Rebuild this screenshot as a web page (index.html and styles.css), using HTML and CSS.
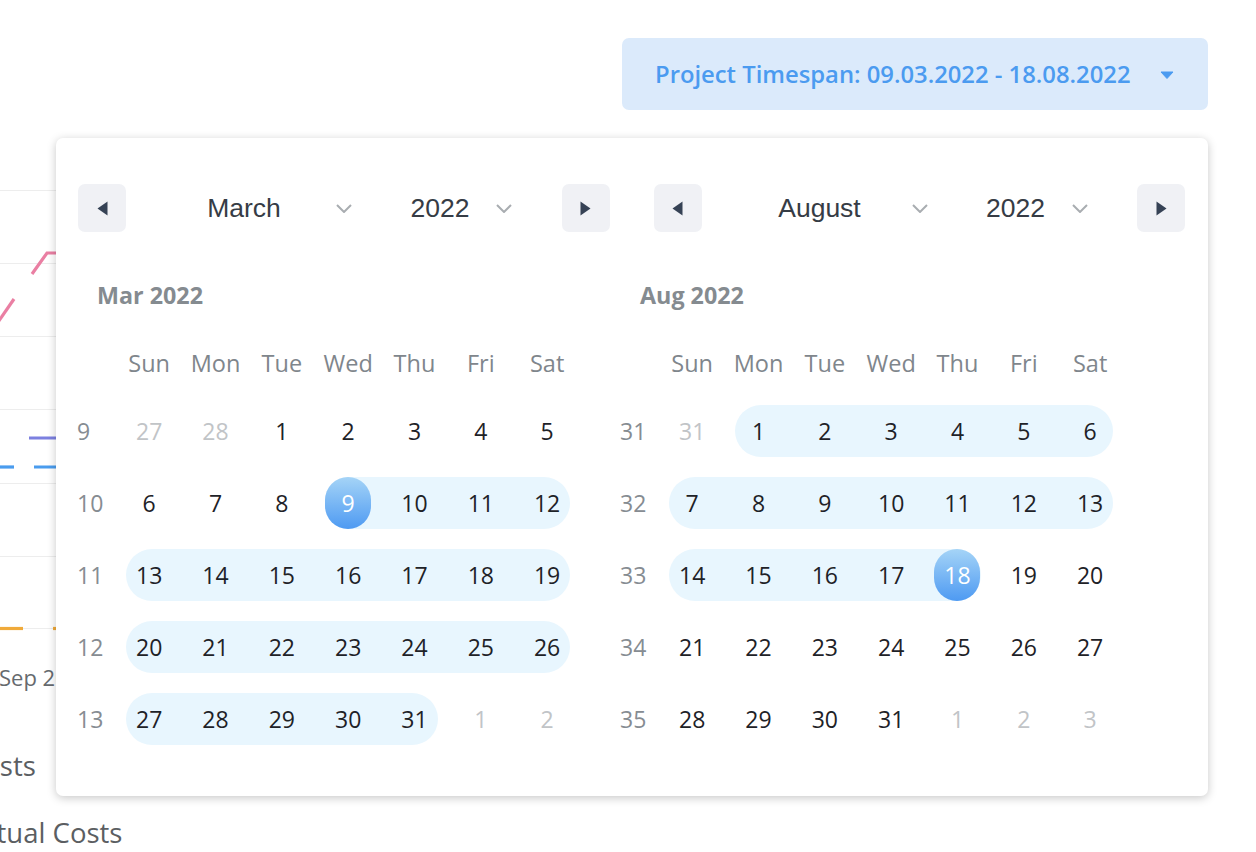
FILE: index.html
```html
<!DOCTYPE html>
<html>
<head>
<meta charset="utf-8">
<link rel="stylesheet" href="styles.css">
</head>
<body>
<div class="page">
  <div class="backdrop">
    <svg class="chart" width="200" height="700" viewBox="0 0 200 700">
      <g stroke="#ededed" stroke-width="1">
        <line x1="0" y1="190.5" x2="200" y2="190.5"/>
        <line x1="0" y1="263.5" x2="200" y2="263.5"/>
        <line x1="0" y1="336.5" x2="200" y2="336.5"/>
        <line x1="0" y1="409.5" x2="200" y2="409.5"/>
        <line x1="0" y1="483.5" x2="200" y2="483.5"/>
        <line x1="0" y1="556.5" x2="200" y2="556.5"/>
        <line x1="0" y1="628.5" x2="200" y2="628.5"/>
      </g>
      <g fill="none" stroke-width="3.2">
        <polyline stroke="#ea7fa3" points="-4,325 14,299"/>
        <polyline stroke="#ea7fa3" points="32,274 47,253 60,253"/>
        <line stroke="#7c80e0" x1="29" y1="438" x2="70" y2="438"/>
        <line stroke="#4a9cee" x1="-2" y1="467" x2="14" y2="467"/>
        <line stroke="#4a9cee" x1="34" y1="467" x2="70" y2="467"/>
        <line stroke="#f0aa3a" x1="-2" y1="628.5" x2="23" y2="628.5"/>
        <line stroke="#f0aa3a" x1="53" y1="628.5" x2="70" y2="628.5"/>
      </g>
      <text class="axis" x="-1" y="686">Sep 2022</text>
    </svg>
    <div class="legend">
      <div class="legend-item planned">Costs</div>
      <div class="legend-item actual">Actual Costs</div>
    </div>
  </div>

  <div class="picker">
    <button class="trigger">
      <span class="trigger-label">Project Timespan: 09.03.2022 - 18.08.2022</span>
      <svg class="caret" width="14" height="8" viewBox="0 0 14 8"><path d="M1 1h12l-6 6.5z" fill="#4b9bf0" stroke="#4b9bf0" stroke-width="1" stroke-linejoin="round"/></svg>
    </button>

    <div class="popup">
      <div class="navs">
        <div class="nav">
          <div class="nav-btn"><svg width="11" height="15" viewBox="0 0 11 15"><path d="M10.5 0.5v14L0.5 7.5z" fill="#364255"/></svg></div>
          <div class="sel month-sel"><span class="sel-text">March</span><svg class="chev" width="16" height="9" viewBox="0 0 16 9"><polyline points="1,1 8,8 15,1" fill="none" stroke="#a9adb1" stroke-width="2"/></svg></div>
          <div class="sel year-sel"><span class="sel-text">2022</span><svg class="chev" width="16" height="9" viewBox="0 0 16 9"><polyline points="1,1 8,8 15,1" fill="none" stroke="#a9adb1" stroke-width="2"/></svg></div>
          <div class="nav-btn right"><svg width="11" height="15" viewBox="0 0 11 15"><path d="M0.5 0.5v14L10.5 7.5z" fill="#364255"/></svg></div>
        </div>
        <div class="nav">
          <div class="nav-btn"><svg width="11" height="15" viewBox="0 0 11 15"><path d="M10.5 0.5v14L0.5 7.5z" fill="#364255"/></svg></div>
          <div class="sel month-sel"><span class="sel-text">August</span><svg class="chev" width="16" height="9" viewBox="0 0 16 9"><polyline points="1,1 8,8 15,1" fill="none" stroke="#a9adb1" stroke-width="2"/></svg></div>
          <div class="sel year-sel"><span class="sel-text">2022</span><svg class="chev" width="16" height="9" viewBox="0 0 16 9"><polyline points="1,1 8,8 15,1" fill="none" stroke="#a9adb1" stroke-width="2"/></svg></div>
          <div class="nav-btn right"><svg width="11" height="15" viewBox="0 0 11 15"><path d="M0.5 0.5v14L10.5 7.5z" fill="#364255"/></svg></div>
        </div>
      </div>

      <div class="months">
        <div class="month">
          <div class="month-title">Mar 2022</div>
          <div class="week head"><span></span><span>Sun</span><span>Mon</span><span>Tue</span><span>Wed</span><span>Thu</span><span>Fri</span><span>Sat</span></div>
          <div class="week">
            <span class="wk">9</span>
            <span class="day out"><b>27</b></span><span class="day out"><b>28</b></span><span class="day"><b>1</b></span><span class="day"><b>2</b></span><span class="day"><b>3</b></span><span class="day"><b>4</b></span><span class="day"><b>5</b></span>
          </div>
          <div class="week">
            <span class="wk">10</span>
            <span class="day"><b>6</b></span><span class="day"><b>7</b></span><span class="day"><b>8</b></span><span class="day in first"><b class="sel-day">9</b></span><span class="day in"><b>10</b></span><span class="day in"><b>11</b></span><span class="day in last"><b>12</b></span>
          </div>
          <div class="week">
            <span class="wk">11</span>
            <span class="day in first"><b>13</b></span><span class="day in"><b>14</b></span><span class="day in"><b>15</b></span><span class="day in"><b>16</b></span><span class="day in"><b>17</b></span><span class="day in"><b>18</b></span><span class="day in last"><b>19</b></span>
          </div>
          <div class="week">
            <span class="wk">12</span>
            <span class="day in first"><b>20</b></span><span class="day in"><b>21</b></span><span class="day in"><b>22</b></span><span class="day in"><b>23</b></span><span class="day in"><b>24</b></span><span class="day in"><b>25</b></span><span class="day in last"><b>26</b></span>
          </div>
          <div class="week">
            <span class="wk">13</span>
            <span class="day in first"><b>27</b></span><span class="day in"><b>28</b></span><span class="day in"><b>29</b></span><span class="day in"><b>30</b></span><span class="day in last"><b>31</b></span><span class="day out"><b>1</b></span><span class="day out"><b>2</b></span>
          </div>
        </div>

        <div class="month">
          <div class="month-title">Aug 2022</div>
          <div class="week head"><span></span><span>Sun</span><span>Mon</span><span>Tue</span><span>Wed</span><span>Thu</span><span>Fri</span><span>Sat</span></div>
          <div class="week">
            <span class="wk">31</span>
            <span class="day out"><b>31</b></span><span class="day in first"><b>1</b></span><span class="day in"><b>2</b></span><span class="day in"><b>3</b></span><span class="day in"><b>4</b></span><span class="day in"><b>5</b></span><span class="day in last"><b>6</b></span>
          </div>
          <div class="week">
            <span class="wk">32</span>
            <span class="day in first"><b>7</b></span><span class="day in"><b>8</b></span><span class="day in"><b>9</b></span><span class="day in"><b>10</b></span><span class="day in"><b>11</b></span><span class="day in"><b>12</b></span><span class="day in last"><b>13</b></span>
          </div>
          <div class="week">
            <span class="wk">33</span>
            <span class="day in first"><b>14</b></span><span class="day in"><b>15</b></span><span class="day in"><b>16</b></span><span class="day in"><b>17</b></span><span class="day in last"><b class="sel-day">18</b></span><span class="day"><b>19</b></span><span class="day"><b>20</b></span>
          </div>
          <div class="week">
            <span class="wk">34</span>
            <span class="day"><b>21</b></span><span class="day"><b>22</b></span><span class="day"><b>23</b></span><span class="day"><b>24</b></span><span class="day"><b>25</b></span><span class="day"><b>26</b></span><span class="day"><b>27</b></span>
          </div>
          <div class="week">
            <span class="wk">35</span>
            <span class="day"><b>28</b></span><span class="day"><b>29</b></span><span class="day"><b>30</b></span><span class="day"><b>31</b></span><span class="day out"><b>1</b></span><span class="day out"><b>2</b></span><span class="day out"><b>3</b></span>
          </div>
        </div>
      </div>
    </div>
  </div>
</div>
</body>
</html>
```

FILE: styles.css
```css
* { box-sizing: border-box; }
html, body { margin: 0; padding: 0; background: #ffffff; }
body { width: 1256px; height: 852px; overflow: hidden; font-family: "Open Sans", "Noto Sans", sans-serif; }

.page { position: relative; width: 1256px; height: 852px; }

.backdrop { position: absolute; left: 0; top: 0; width: 200px; height: 852px; overflow: hidden; }
.chart { display: block; }
.axis { font-family: "Open Sans", sans-serif; font-size: 22px; fill: #666a6e; }
.legend { display: flex; flex-direction: column; }
.legend-item { font-family: "Open Sans", sans-serif; font-size: 27.5px; color: #5b5e62; line-height: 36px; white-space: nowrap; }
.legend-item.planned { margin-top: 48px; margin-left: -34px; }
.legend-item.actual { margin-top: 31px; margin-left: -34px; }

.picker { display: flex; flex-direction: column; align-items: flex-end; padding: 38px 48px 0 0; }

.trigger { width: 586px; height: 72px; border: 0; border-radius: 7px; background: #dbeafb; display: flex; align-items: center; justify-content: space-between; padding: 0 34px 0 33px; font-family: "Open Sans", "Noto Sans", sans-serif; font-weight: 600; font-size: 23.8px; color: #4b9bf0; cursor: pointer; }
.trigger-label { white-space: nowrap; }
.caret { display: block; margin-top: 1px; }

.popup { position: relative; z-index: 1; margin-top: 28px; width: 1152px; height: 658px; background: #fff; border-radius: 7px; box-shadow: 0 2px 10px rgba(0,0,0,0.22); padding: 46px 23px 0 22px; }

.navs { display: flex; gap: 44px; }
.nav { width: 532px; height: 48px; display: flex; align-items: center; }
.nav-btn { width: 48px; height: 48px; border-radius: 7px; background: #f0f1f5; display: flex; align-items: center; justify-content: center; }
.nav-btn svg { display: block; }
.nav-btn.right { margin-left: auto; }
.sel { display: flex; align-items: center; font-family: "Liberation Sans", Arial, sans-serif; font-size: 26.5px; color: #363c45; }
.month-sel { margin-left: 48px; }
.month-sel .sel-text { width: 140px; text-align: center; }
.month-sel .chev { margin-left: 22px; }
.year-sel { margin-left: 38px; }
.year-sel .sel-text { width: 100px; text-align: center; }
.year-sel .chev { margin-left: 6px; }
.chev { display: block; }

.months { display: flex; gap: 40px; margin-left: -1px; }
.month { width: 503px; }
.month-title { margin-top: 48px; margin-left: 20px; height: 30px; line-height: 30px; font-weight: 700; font-size: 23.3px; color: #858b90; }

.week { display: grid; grid-template-columns: 39px repeat(7, 66.33px); height: 52px; margin-top: 20px; align-items: stretch; }
.week.head { margin-top: 27px; margin-bottom: -4px; }
.week.head span { display: flex; align-items: center; justify-content: center; font-size: 23.5px; color: #7f868c; }
.wk { display: flex; align-items: center; font-size: 23px; color: #868c92; }
.day { display: flex; align-items: center; justify-content: center; font-size: 23px; color: #1e2227; }
.day b { font-weight: 400; }
.day.out { color: #c1c4c7; }
.day.in { background: #e8f6fe; }
.day.in.first { margin-left: 10px; padding-right: 10px; border-radius: 26px 0 0 26px; }
.day.in.last { margin-right: 10px; padding-left: 10px; border-radius: 0 26px 26px 0; }
.day.in.first.last { border-radius: 26px; }
.sel-day { width: 46px; height: 52px; border-radius: 23px; display: flex; align-items: center; justify-content: center; color: #fff; background: linear-gradient(180deg, #a5d4f7 0%, #4e9af2 100%); }
```
